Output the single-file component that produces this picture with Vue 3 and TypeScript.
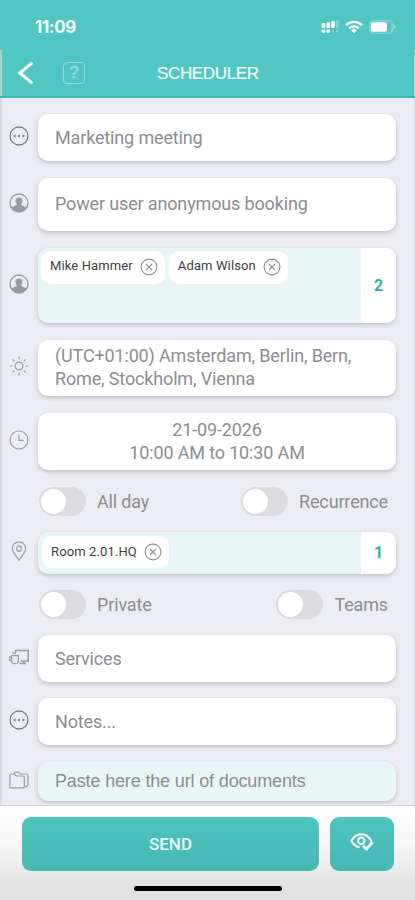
<script setup lang="ts">
import { ref } from 'vue'

interface Toggle {
  label: string
  on: boolean
}

const attendees = ref<string[]>(['Mike Hammer', 'Adam Wilson'])
const rooms = ref<string[]>(['Room 2.01.HQ'])
const timing = ref<Toggle[]>([
  { label: 'All day', on: false },
  { label: 'Recurrence', on: false },
])
const options = ref<Toggle[]>([
  { label: 'Private', on: false },
  { label: 'Teams', on: false },
])

function remove(list: string[], index: number) {
  list.splice(index, 1)
}
</script>

<template>
  <div class="phone">
    <header class="top">
      <div class="status">
        <span class="time">11:09</span>
        <div class="signals">
          <svg width="19" height="15" viewBox="0 0 19 15" fill="#fff">
            <rect x="1.6" y="4" width="3.6" height="5" rx="1" />
            <rect x="6.4" y="3.6" width="3.6" height="5.4" rx="1" />
            <rect x="11.2" y="2" width="3.6" height="7" rx="1" />
            <rect x="16" y="1" width="2.6" height="8" rx="1" opacity=".3" />
            <rect x="1.6" y="10.4" width="3.6" height="3.4" rx="1" />
            <rect x="6.4" y="10.4" width="3.6" height="3.4" rx="1" />
            <rect x="11.8" y="11" width="2.2" height="2.2" rx="1" opacity=".35" />
            <rect x="16" y="11" width="2.2" height="2.2" rx="1" opacity=".35" />
          </svg>
          <svg class="wifi" width="18" height="14" viewBox="0 0 18 14">
            <g fill="none" stroke="#fff" stroke-width="2.3">
              <path d="M1 5.1A11.6 11.6 0 0 1 17 5.1" />
              <path d="M4.2 8.4A6.9 6.9 0 0 1 13.8 8.4" />
            </g>
            <path d="M9 13.2L6.2 10.3A4 4 0 0 1 11.8 10.3Z" fill="#fff" />
          </svg>
          <svg class="battery" width="27" height="14" viewBox="0 0 27 14">
            <rect x=".8" y=".8" width="22.4" height="12.4" rx="3.6" fill="none" stroke="#fff" stroke-opacity=".32" stroke-width="1.3" />
            <rect x="2" y="2.2" width="16" height="9.6" rx="2" fill="#fff" />
            <path d="M24.4 4.2Q26.4 5 26.4 7T24.4 9.8Z" fill="#fff" opacity=".4" />
          </svg>
        </div>
      </div>
      <div class="nav">
        <svg class="back" width="17" height="24" viewBox="0 0 17 24">
          <path d="M14.3 2.6L2.8 12L14.3 21.4" fill="none" stroke="#fff" stroke-width="3.1" stroke-linecap="round" stroke-linejoin="miter" />
        </svg>
        <span class="help">?</span>
        <h1 class="title">SCHEDULER</h1>
      </div>
    </header>

    <main class="form">
      <div class="row subject">
        <svg class="icon dark" viewBox="0 0 20 20">
          <circle cx="10" cy="10" r="9" />
          <g class="solid"><circle cx="5.6" cy="10" r="1.25" /><circle cx="10" cy="10" r="1.25" /><circle cx="14.4" cy="10" r="1.25" /></g>
        </svg>
        <div class="card"><span class="text">Marketing meeting</span></div>
      </div>

      <div class="row organizer">
        <svg class="icon" viewBox="0 0 20 20">
          <circle cx="10" cy="10" r="9" />
          <path class="solid" d="M10 4.6C7.5 4.6 6.3 6 6.5 8C6.6 9.6 7.1 10.6 7.9 11.4C7.8 12.5 4.6 12.4 2.6 14.8Q5.6 19.2 10 19.2T17.4 14.8C15.4 12.4 12.2 12.5 12.1 11.4C12.9 10.6 13.4 9.6 13.5 8C13.7 6 12.5 4.6 10 4.6Z" />
        </svg>
        <div class="card"><span class="text">Power user anonymous booking</span></div>
      </div>

      <div class="row attendees">
        <svg class="icon" viewBox="0 0 20 20">
          <circle cx="10" cy="10" r="9" />
          <path class="solid" d="M10 4.6C7.5 4.6 6.3 6 6.5 8C6.6 9.6 7.1 10.6 7.9 11.4C7.8 12.5 4.6 12.4 2.6 14.8Q5.6 19.2 10 19.2T17.4 14.8C15.4 12.4 12.2 12.5 12.1 11.4C12.9 10.6 13.4 9.6 13.5 8C13.7 6 12.5 4.6 10 4.6Z" />
        </svg>
        <div class="card picker">
          <div class="chips">
            <span v-for="(name, i) in attendees" :key="name" class="chip">
              <span class="chip-name">{{ name }}</span>
              <svg class="remove" viewBox="0 0 18 18" @click="remove(attendees, i)">
                <circle cx="9" cy="9" r="7.9" /><path d="M6 6L12 12M12 6L6 12" />
              </svg>
            </span>
          </div>
          <span class="count">{{ attendees.length }}</span>
        </div>
      </div>

      <div class="row zone">
        <svg class="icon light" viewBox="0 0 20 20">
          <circle cx="10" cy="10" r="3.9" />
          <path d="M10 .8V3.4M10 16.6V19.2M.8 10H3.4M16.6 10H19.2M3.5 3.5L5.3 5.3M14.7 14.7L16.5 16.5M3.5 16.5L5.3 14.7M14.7 5.3L16.5 3.5" />
        </svg>
        <div class="card"><span class="text">(UTC+01:00) Amsterdam, Berlin, Bern,<br />Rome, Stockholm, Vienna</span></div>
      </div>

      <div class="row when">
        <svg class="icon light" viewBox="0 0 20 20">
          <circle cx="10" cy="10" r="9" /><path d="M10 4.8V10.3H14.6" />
        </svg>
        <div class="card centered"><span class="text">21-09-2026<br />10:00 AM to 10:30 AM</span></div>
      </div>

      <div class="toggles">
        <label v-for="t in timing" :key="t.label" class="toggle">
          <span class="switch" :class="{ on: t.on }" @click="t.on = !t.on"></span>
          <span class="text">{{ t.label }}</span>
        </label>
      </div>

      <div class="row rooms">
        <svg class="icon light" viewBox="0 0 20 20">
          <path d="M10 19.2C8 16.2 3.3 11.8 3.3 7.6A6.7 6.7 0 0 1 16.7 7.6C16.7 11.8 12 16.2 10 19.2Z" />
          <ellipse cx="10" cy="7.6" rx="2.3" ry="2.8" />
        </svg>
        <div class="card picker">
          <div class="chips">
            <span v-for="(name, i) in rooms" :key="name" class="chip">
              <span class="chip-name">{{ name }}</span>
              <svg class="remove" viewBox="0 0 18 18" @click="remove(rooms, i)">
                <circle cx="9" cy="9" r="7.9" /><path d="M6 6L12 12M12 6L6 12" />
              </svg>
            </span>
          </div>
          <span class="count">{{ rooms.length }}</span>
        </div>
      </div>

      <div class="toggles">
        <label v-for="t in options" :key="t.label" class="toggle">
          <span class="switch" :class="{ on: t.on }" @click="t.on = !t.on"></span>
          <span class="text">{{ t.label }}</span>
        </label>
      </div>

      <div class="row services">
        <svg class="icon light" viewBox="0 0 20 20">
          <path class="strong" d="M6.5 6V3.5H19.2V14H11.5M15 14V16.2M10.5 16.4H17" />
          <path d="M2.6 8.6H9.4V13.4Q9.4 16.6 6 16.6T2.6 13.4ZM2.6 9.8H.8V13.3H2.7M4 4.8V7M6 5.4V7.2" />
        </svg>
        <div class="card"><span class="text">Services</span></div>
      </div>

      <div class="row notes">
        <svg class="icon dark" viewBox="0 0 20 20">
          <circle cx="10" cy="10" r="9" />
          <g class="solid"><circle cx="5.6" cy="10" r="1.25" /><circle cx="10" cy="10" r="1.25" /><circle cx="14.4" cy="10" r="1.25" /></g>
        </svg>
        <div class="card"><span class="text">Notes...</span></div>
      </div>

      <div class="row documents">
        <svg class="icon light" viewBox="0 0 20 20">
          <path d="M.9 5.2Q.9 4 2 4H5.4L7.2 6H14Q15.3 6 15.3 7.2V16.4Q15.3 17.8 14 17.8H2.2Q.9 17.8 .9 16.4Z" />
          <path d="M5.4 4Q5.6 2.2 6.8 2.2H9.6L11.4 4H17.6Q19 4 19 5.2V15Q19 16.6 15.6 16.8" />
        </svg>
        <div class="card tinted"><span class="text arial">Paste here the url of documents</span></div>
      </div>
    </main>

    <footer class="bottom">
      <div class="actions">
        <button class="send" type="button"><span>SEND</span></button>
        <button class="preview" type="button">
          <svg width="24" height="20" viewBox="0 0 24 20" fill="none" stroke="#fff" stroke-width="1.9">
            <path d="M9.5 15.2C5.8 14.6 3 11.8 1.4 8.7C3.6 4.6 7.2 2.2 11.3 2.2S19 4.6 21.2 8.7L20.6 9.7" />
            <circle cx="11.3" cy="8.7" r="3.2" />
            <path d="M13 13.8L16.4 17L22.6 10.2" stroke-width="2.7" />
          </svg>
        </button>
      </div>
      <div class="home"></div>
    </footer>
  </div>
</template>

<style>
body {
  background: #e2e2e3;
}
</style>

<style scoped>
.phone {
  width: 415px;
  height: 900px;
  display: flex;
  flex-direction: column;
  overflow: hidden;
  font-family: Roboto, sans-serif;
  background: #e2e2e3;
}
.top {
  height: 98px;
  flex: none;
  box-sizing: border-box;
  background: #52c6c0;
  border-bottom: 2px solid #3dbab3;
}
.status {
  height: 50px;
  box-sizing: border-box;
  padding: 17px 19px 0 35px;
  display: flex;
  justify-content: space-between;
  align-items: flex-start;
}
.time {
  font: 700 17px/20px Inter, sans-serif;
  letter-spacing: -0.4px;
  color: #effdfc;
}
.signals {
  display: flex;
  align-items: center;
  padding-top: 2px;
}
.wifi {
  margin-left: 6px;
}
.battery {
  margin-left: 6px;
}
.nav {
  height: 46px;
  display: flex;
  align-items: center;
  padding-left: 15px;
  border-left: 2px solid #a9d0ce;
  border-right: 1px solid #a9d0ce;
}
.back {
  flex: none;
}
.help {
  width: 22px;
  height: 22px;
  box-sizing: border-box;
  margin-left: 29px;
  border: 1.6px solid #93dfda;
  border-radius: 4px;
  font: 400 17px/19px "Liberation Sans", sans-serif;
  text-align: center;
  color: #93dfda;
  -webkit-text-stroke: 0.4px #93dfda;
}
.title {
  margin: 1px 0 0 72px;
  font: 400 17px/20px "Liberation Sans", sans-serif;
  letter-spacing: -0.35px;
  color: #effdfc;
  -webkit-text-stroke: 0.2px #effdfc;
}
.form {
  height: 707px;
  flex: none;
  box-sizing: border-box;
  padding-top: 16px;
  border-left: 2px solid #dcdce0;
  border-right: 1px solid #dcdce0;
  background: #ecedf3;
}
.row {
  display: flex;
  align-items: center;
  padding-left: 7px;
}
.icon {
  width: 20px;
  height: 20px;
  flex: none;
  margin: 0 9px 4px 0;
  fill: none;
  stroke: #97989e;
  stroke-width: 1.3;
}
.icon.dark {
  stroke: #7d7e84;
}
.icon.light {
  stroke: #9c9da2;
  stroke-width: 1.2;
}
.icon .solid {
  fill: #999a9f;
  stroke: none;
}
.icon.dark .solid {
  fill: #85868c;
}
.icon .strong {
  stroke-width: 1.5;
}
.card {
  width: 358px;
  height: 100%;
  box-sizing: border-box;
  display: flex;
  align-items: center;
  padding-left: 17px;
  border-radius: 10px;
  background: #fff;
  box-shadow: 0 2px 4px rgba(60, 60, 70, 0.24);
}
.card.centered {
  justify-content: center;
  padding: 0 0 2px;
  text-align: center;
}
.card.tinted {
  background: #e9f6f6;
}
.text {
  font-size: 18px;
  line-height: 23px;
  letter-spacing: -0.15px;
  color: #8d8d8f;
  white-space: nowrap;
}
.text.arial {
  font-family: "Liberation Sans", sans-serif;
}
.subject {
  height: 47px;
  margin-bottom: 17px;
}
.organizer {
  height: 53px;
  margin-bottom: 17px;
}
.organizer .card,
.zone .card {
  padding-bottom: 2px;
}
.attendees {
  height: 75px;
  margin-bottom: 17px;
}
.zone {
  height: 56px;
  margin-bottom: 17px;
}
.when {
  height: 57px;
  margin-bottom: 17px;
}
.rooms {
  height: 42px;
  margin-bottom: 16px;
}
.services {
  height: 47px;
  margin-bottom: 16px;
}
.notes {
  height: 47px;
  margin-bottom: 17px;
}
.documents {
  height: 39px;
}
.picker {
  padding-left: 0;
  justify-content: space-between;
  overflow: hidden;
  background: #e9f6f6;
}
.chips {
  display: flex;
  gap: 4px;
  align-self: flex-start;
  padding: 3px 0 0 3px;
}
.rooms .chips {
  padding: 4px 0 0 4px;
}
.chip {
  height: 33px;
  box-sizing: border-box;
  display: flex;
  align-items: center;
  gap: 7px;
  padding: 0 7px 0 9px;
  border-radius: 10px;
  background: #fff;
}
.attendees .chip {
  padding-bottom: 2px;
}
.rooms .chip {
  height: 32px;
}
.chip-name {
  font-size: 13px;
  line-height: 16px;
  letter-spacing: 0.12px;
  color: #3e3e40;
  white-space: nowrap;
  padding-bottom: 1px;
}
.remove {
  width: 18px;
  height: 18px;
  fill: none;
  stroke: #919193;
  stroke-width: 1.1;
}
.count {
  width: 35px;
  height: 100%;
  box-sizing: border-box;
  padding-bottom: 1px;
  display: flex;
  align-items: center;
  justify-content: center;
  background: #fff;
  color: #2bb3aa;
  font-size: 16px;
  font-weight: 700;
}
.toggles {
  height: 29px;
  display: flex;
  justify-content: space-between;
  padding: 0 26px 0 37px;
  margin-bottom: 16px;
}
.toggle {
  display: flex;
  align-items: center;
  gap: 11px;
}
.switch {
  width: 47px;
  height: 29px;
  box-sizing: border-box;
  padding: 2px;
  border-radius: 15px;
  background: #dcdce0;
}
.switch::before {
  content: "";
  display: block;
  width: 25px;
  height: 25px;
  border-radius: 50%;
  background: #fff;
}
.switch.on {
  background: #52c6c0;
}
.switch.on::before {
  margin-left: auto;
}
.bottom {
  flex: 1;
  box-sizing: border-box;
  padding-top: 11px;
  border-top: 1px solid #d6d6da;
  background: linear-gradient(#fff, #f7f7f7 40px, #e2e2e3 78px);
}
.actions {
  display: flex;
  gap: 11px;
  padding-left: 22px;
}
.send,
.preview {
  height: 54px;
  padding: 0;
  border: 0;
  border-radius: 9px;
  background: linear-gradient(#4fc5be, #49b7b4);
  display: flex;
  align-items: center;
  justify-content: center;
}
.send {
  width: 297px;
  font: 500 17px/20px Roboto, sans-serif;
  color: #e6fbf9;
}
.preview {
  width: 64px;
  padding-bottom: 4px;
}
.home {
  width: 148px;
  height: 5px;
  margin: 15px 0 0 134px;
  border-radius: 3px;
  background: #000;
}
</style>
